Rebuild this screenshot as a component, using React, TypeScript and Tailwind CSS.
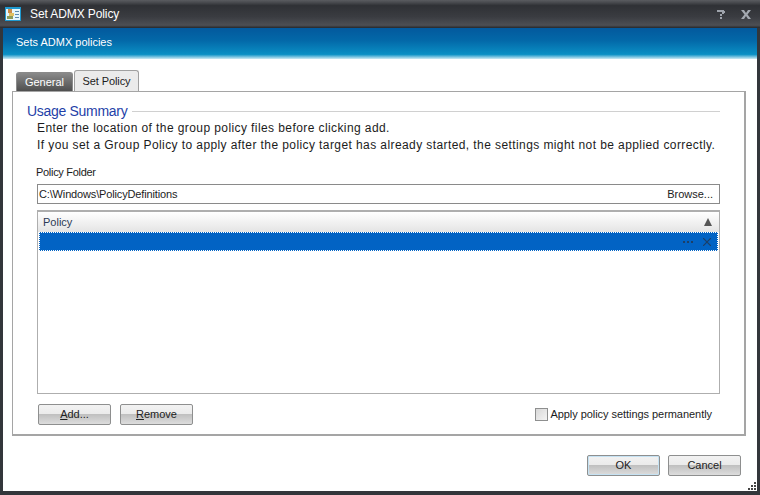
import React from "react";

const btn = "flex items-center justify-center h-[21px] rounded-[2px] border border-[#8e8f8f] bg-[linear-gradient(to_bottom,#f2f2f2_0%,#ebebeb_45%,#c0c0c0_50%,#dddddd_100%)] text-[11px] text-[#222]";

export default function App() {
  return (
    <div className="w-[760px] h-[495px] flex flex-col bg-[#33363b] overflow-hidden text-[11px] text-[#1c1c1c] font-['Liberation_Sans',Arial,sans-serif] leading-none">
      <div className="h-[28px] shrink-0 flex items-center bg-[linear-gradient(to_bottom,#5a5c60_0%,#4a4c50_8%,#2f3135_20%,#3a3c41_60%,#4d4f54_90%,#26282b_100%)]">
        <svg className="ml-[5px]" width="16" height="14" viewBox="0 0 16 14">
          <rect width="16" height="14" fill="#e4f5fb" />
          <rect x="0" y="0" width="16" height="2" fill="#1f9ad0" />
          <rect x="0" y="0" width="1" height="14" fill="#1f9ad0" />
          <rect x="15" y="0" width="1" height="14" fill="#1f9ad0" />
          <rect x="0" y="13" width="16" height="1" fill="#1f9ad0" />
          <rect x="3" y="2" width="4" height="4" fill="#c98a4a" />
          <rect x="4" y="6" width="5" height="3" fill="#e0c060" />
          <rect x="2" y="9" width="6" height="3" fill="#8a9a5a" />
          <rect x="10" y="4" width="4" height="1" fill="#5a8ab0" />
          <rect x="10" y="7" width="4" height="1" fill="#5a8ab0" />
          <rect x="10" y="10" width="4" height="1" fill="#5a8ab0" />
        </svg>
        <span className="ml-[9px] text-[12px] tracking-[-0.1px] text-white">Set ADMX Policy</span>
        <div className="ml-auto flex items-center gap-[16px] mr-[9px]">
          <svg width="8" height="9" viewBox="0 0 8 9" fill="#9ea3ab">
            <path d="M0 0h7v1h1v2H7v1H5v2H3V4h2V2H0zM3 7h2v2H3z" />
          </svg>
          <svg width="10" height="9" viewBox="0 0 10 9" fill="#a3a8b0">
            <path d="M0 0h3l2 3 2-3h3L6.500 4.500 10 9H7L5 6 3 9H0l3.500-4.500z" />
          </svg>
        </div>
      </div>
      <div className="relative flex-1 min-h-0 flex flex-col mx-[3px] mb-[4px] bg-white">
        <div className="h-[31px] shrink-0 flex items-center pl-[13px] pb-[3px] text-[11px] text-white bg-[linear-gradient(to_bottom,#03599d_0%,#0368a8_40%,#0a8fc4_85%,#cdeaf4_100%)]">
          Sets ADMX policies
        </div>
        <div className="flex-1 min-h-0 flex flex-col pl-[9px] pr-[11px] pt-[11px]">
          <div className="flex items-end h-[21px] pl-[4px] gap-[1px]">
            <div className="w-[57px] h-[19px] flex items-center justify-center rounded-t-[3px] border border-[#8a8a8a] border-b-0 bg-[linear-gradient(to_bottom,#8a8a8a,#4f4f4f)] text-white text-[11px]">General</div>
            <div className="w-[65px] h-[21px] flex items-center justify-center rounded-t-[3px] border border-[#a0a0a0] border-b-0 bg-[#ebebeb] text-[11px] tracking-[-0.1px]">Set Policy</div>
          </div>
          <div className="h-[345px] flex flex-col border border-[#a5a5a5] border-r-2 border-b-2 bg-white pl-[14px] pr-[24px]">
            <div className="flex items-center mt-[11px] h-[16px]">
              <span className="text-[14px] tracking-[-0.3px] text-[#1f3fa8]">Usage Summary</span>
              <div className="flex-1 h-px bg-[#d0d0d0] ml-[5px]" />
            </div>
            <div className="pl-[10px] pt-[1px] text-[12px] leading-[17px] whitespace-nowrap tracking-[0.41px]">
              <div>Enter the location of the group policy files before clicking add.</div>
              <div>If you set a Group Policy to apply after the policy target has already started, the settings might not be applied correctly.</div>
            </div>
            <div className="pl-[9px] mt-[11px] text-[11px] tracking-[-0.3px] h-[14px] flex items-center">Policy Folder</div>
            <div className="ml-[10px] mt-[5px] h-[20px] flex items-center justify-between border border-[#8a8a8a] pl-[1px] pr-[6px] text-[11px]">
              <span className="tracking-[-0.15px]">C:\Windows\PolicyDefinitions</span>
              <span>Browse...</span>
            </div>
            <div className="ml-[10px] mt-[6px] h-[184px] flex flex-col border-2 border-[#aeaeae] border-b border-r border-l-1 bg-white">
              <div className="h-[20px] flex items-center justify-between pl-[5px] pr-[7px] bg-[linear-gradient(to_bottom,#ffffff,#e4e4e4)] text-[#2b3a55] text-[11px]">
                <span>Policy</span>
                <svg width="8" height="8" viewBox="0 0 8 8" fill="#555"><path d="M4 0l4 8H0z" /></svg>
              </div>
              <div className="h-[19px] mx-[1px] flex items-center justify-end gap-[10px] pr-[6px] bg-[#0263c4] border border-dotted border-white">
                <svg width="10" height="2" viewBox="0 0 10 2" fill="#1d3f66"><path d="M0 0h2v2H0zM4 0h2v2H4zM8 0h2v2H8z" /></svg>
                <svg width="8" height="8" viewBox="0 0 8 8" stroke="#1d3f66" strokeWidth="1.200" fill="none"><path d="M0 0l8 8M8 0L0 8" /></svg>
              </div>
            </div>
            <div className="ml-[1px] mt-[10px] flex items-center">
              <div className={btn + " ml-[10px] w-[73px]"}><span><u>A</u>dd...</span></div>
              <div className={btn + " w-[73px] ml-[9px]"}><span><u>R</u>emove</span></div>
              <label className="ml-auto mr-[8px] flex items-center gap-[2px] text-[11px] tracking-[-0.05px]">
                <span className="w-[13px] h-[13px] border border-[#8e8f8f] bg-[linear-gradient(135deg,#d8d8d8,#f4f4f4)]" />
                Apply policy settings permanently
              </label>
            </div>
          </div>
          <div className="flex justify-end gap-[8px] mt-[19px] pr-[5px]">
            <div className={btn + " w-[73px] border-[#5e9fc8] shadow-[inset_0_0_0_1px_#c5e2f3]"}>OK</div>
            <div className={btn + " w-[73px]"}>Cancel</div>
          </div>
        </div>
        <svg className="absolute right-[1px] bottom-[1px]" width="8" height="8" viewBox="0 0 8 8" fill="#444">
          <path d="M6 0h2v2H6zM3 3h2v2H3zM6 3h2v2H6zM0 6h2v2H0zM3 6h2v2H3zM6 6h2v2H6z" />
        </svg>
      </div>
    </div>
  );
}
